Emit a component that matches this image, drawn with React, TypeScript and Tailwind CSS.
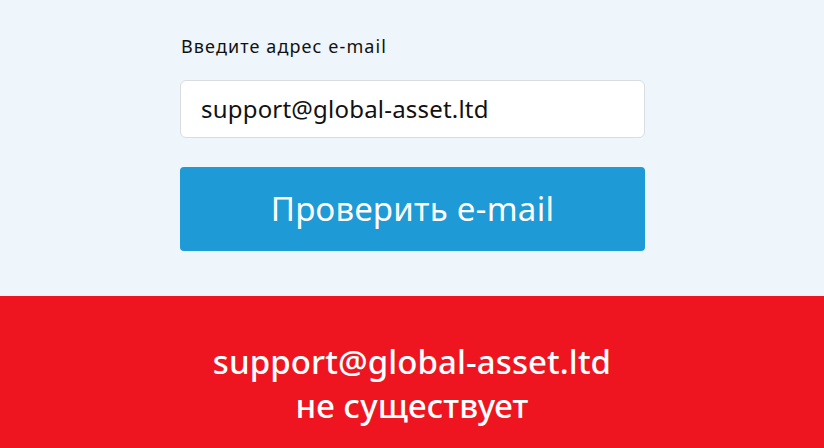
export default function App() {
  const font = { fontFamily: '"Noto Sans", "Open Sans", sans-serif' };
  return (
    <div className="w-[824px] h-[448px] flex flex-col bg-[#eef5fb]" style={font}>
      <div className="h-[296px] shrink-0 pl-[180px] pt-[34px]">
        <div className="w-[465px] flex flex-col">
          <label className="text-[18px] leading-[24px] text-[#111] pl-[1px] tracking-[1.1px]">Введите адрес e-mail</label>
          <div className="mt-[22px] h-[58px] rounded-[6px] border border-[#d9dde2] bg-white flex items-center px-[20px] text-[24px] text-[#111] tracking-[0.2px]">
            support@global-asset.ltd
          </div>
          <button className="mt-[29px] h-[84px] rounded-[4px] bg-[#1e9ad6] text-white text-[33px] tracking-[0.3px] flex items-center justify-center">
            Проверить e-mail
          </button>
        </div>
      </div>
      <div className="flex-1 bg-[#ef1520] flex flex-col items-center justify-center text-white text-[33px] font-medium tracking-[0.1px] leading-[44px] pt-[24px]">
        <div>support@global-asset.ltd</div>
        <div>не существует</div>
      </div>
    </div>
  );
}
